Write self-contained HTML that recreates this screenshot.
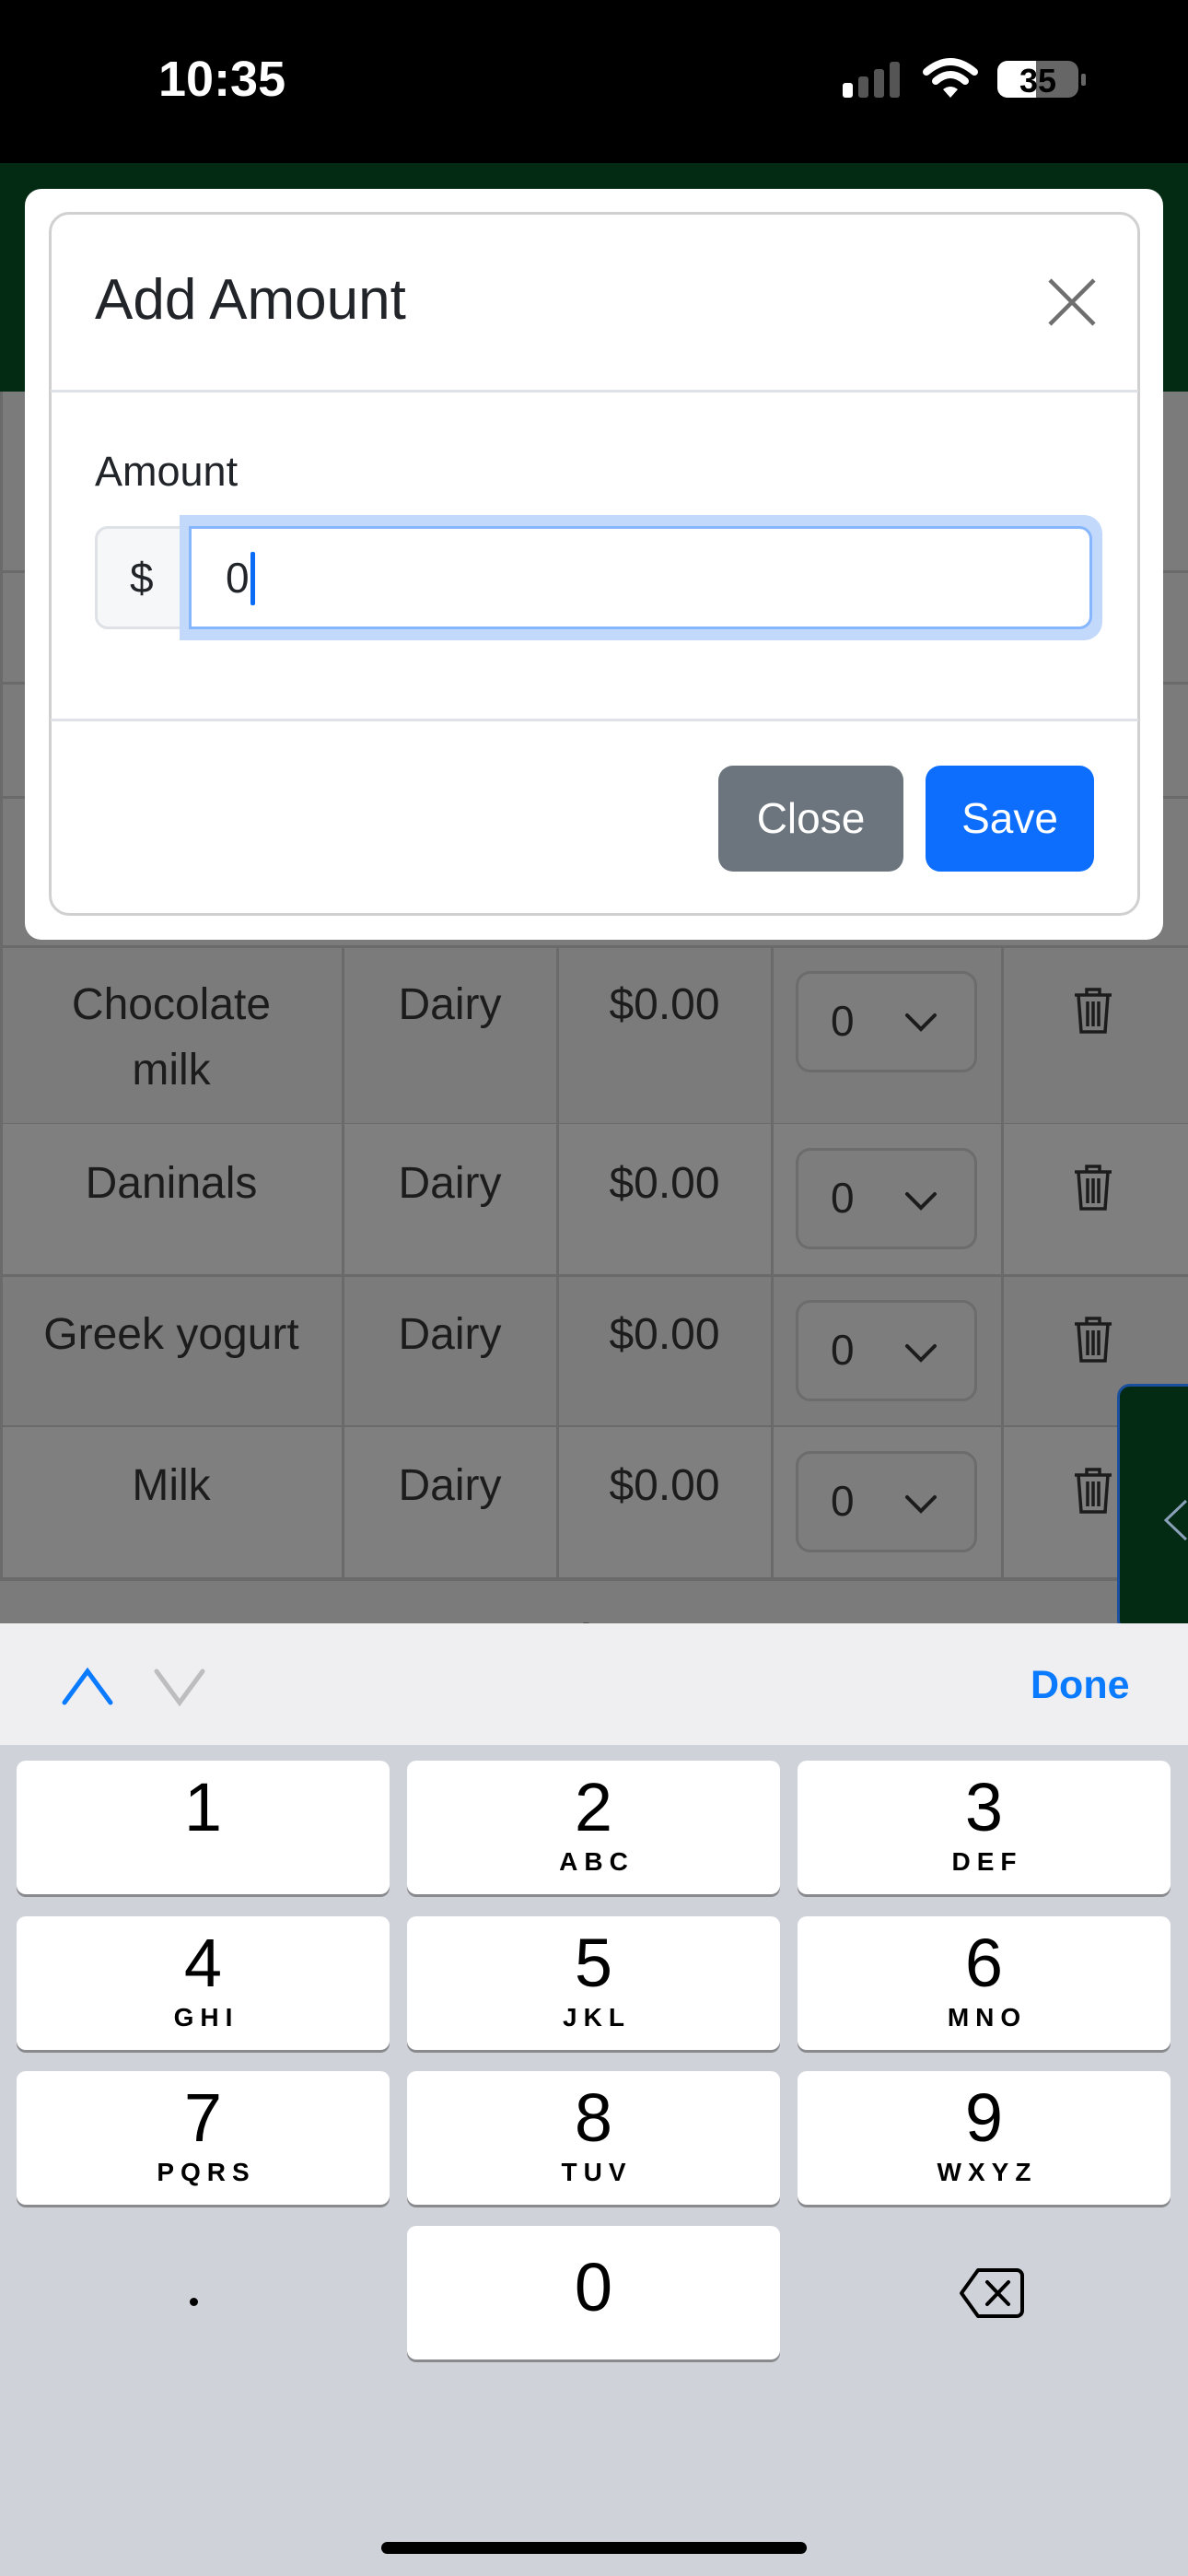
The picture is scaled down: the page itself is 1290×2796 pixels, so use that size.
<!DOCTYPE html>
<html><head><meta charset="utf-8"><style>
*{margin:0;padding:0;box-sizing:border-box}
body{width:1290px;height:2796px;position:relative;overflow:hidden;background:#7b7b7b;font-family:"Liberation Sans",Arial,sans-serif}
.abs{position:absolute}
.cell{position:absolute;color:#1c1c1c;font-size:48px;text-align:center;line-height:71px}
.sel{position:absolute;left:864px;width:197px;height:110px;border:3px solid #6c6c6c;border-radius:16px;background:#7d7d7d}
.sel span{position:absolute;left:35px;top:24px;font-size:46px;color:#1c1c1c}
.key{position:absolute;width:405px;height:145px;background:#fff;border-radius:10px;box-shadow:0 3px 0 #898a8d;text-align:center}
.key .d{position:absolute;left:0;right:0;top:6px;font-size:74px;color:#000;line-height:90px}
.key .l{position:absolute;left:0;right:0;top:94px;font-size:28px;font-weight:bold;letter-spacing:7px;color:#000;padding-left:7px}
</style></head><body>
<div class="abs" style="left:0;top:0;width:1290px;height:177px;background:#000"></div>
<div class="abs" style="left:172px;top:55px;color:#fff;font-size:54px;font-weight:bold">10:35</div>
<svg class="abs" style="left:910px;top:60px" width="270" height="60">
<rect x="5" y="30" width="11" height="16" rx="3" fill="#fff"/>
<rect x="22" y="23" width="11" height="23" rx="3" fill="#555"/>
<rect x="39" y="15" width="11" height="31" rx="3" fill="#555"/>
<rect x="56" y="7" width="11" height="39" rx="3" fill="#555"/>
<path d="M96 18 Q122 -4 148 18" stroke="#fff" stroke-width="8" fill="none" stroke-linecap="round"/>
<path d="M106 28 Q122 14 138 28" stroke="#fff" stroke-width="8" fill="none" stroke-linecap="round"/>
<path d="M114 37 L122 46 L130 37 Q122 31 114 37Z" fill="#fff"/>
<rect x="173" y="6" width="88" height="40" rx="11" fill="#666"/>
<path d="M184 6 H215 V46 H184 A11 11 0 0 1 173 35 V17 A11 11 0 0 1 184 6Z" fill="#fff"/>
<rect x="264" y="20" width="5" height="13" rx="2" fill="#666"/>
<text x="217" y="40" font-size="36" font-weight="bold" fill="#000" text-anchor="middle" font-family="Liberation Sans">35</text>
</svg>
<div class="abs" style="left:0;top:177px;width:1290px;height:248px;background:#032b13"></div>
<div class="abs" style="left:0;top:619px;width:1290px;height:3px;background:#6a6a6a"></div>
<div class="abs" style="left:0;top:740px;width:1290px;height:3px;background:#6a6a6a"></div>
<div class="abs" style="left:0;top:864px;width:1290px;height:3px;background:#6a6a6a"></div>
<div class="abs" style="left:0;top:1026px;width:1290px;height:3px;background:#6a6a6a"></div>
<div class="abs" style="left:0;top:1219px;width:1290px;height:3px;background:#6a6a6a"></div>
<div class="abs" style="left:0;top:1383px;width:1290px;height:3px;background:#6a6a6a"></div>
<div class="abs" style="left:0;top:1547px;width:1290px;height:3px;background:#6a6a6a"></div>
<div class="abs" style="left:0;top:1712px;width:1290px;height:4px;background:#6a6a6a"></div>
<div class="abs" style="left:0;top:1220px;width:1290px;height:163px;background:#7f7f7f"></div>
<div class="abs" style="left:0;top:1549px;width:1290px;height:163px;background:#7f7f7f"></div>
<div class="abs" style="left:0;top:425px;width:3px;height:1290px;background:#6a6a6a"></div>
<div class="abs" style="left:371px;top:1026px;width:3px;height:688px;background:#6a6a6a"></div>
<div class="abs" style="left:604px;top:1026px;width:3px;height:688px;background:#6a6a6a"></div>
<div class="abs" style="left:837px;top:1026px;width:3px;height:688px;background:#6a6a6a"></div>
<div class="abs" style="left:1087px;top:1026px;width:3px;height:688px;background:#6a6a6a"></div>
<div class="cell" style="left:0;width:372px;top:1055px">Chocolate<br>milk</div>
<div class="cell" style="left:372px;width:233px;top:1055px">Dairy</div>
<div class="cell" style="left:605px;width:233px;top:1055px">$0.00</div>
<div class="sel" style="top:1054px"><span>0</span></div>
<div class="cell" style="left:0;width:372px;top:1249px">Daninals</div>
<div class="cell" style="left:372px;width:233px;top:1249px">Dairy</div>
<div class="cell" style="left:605px;width:233px;top:1249px">$0.00</div>
<div class="sel" style="top:1246px"><span>0</span></div>
<div class="cell" style="left:0;width:372px;top:1413px">Greek yogurt</div>
<div class="cell" style="left:372px;width:233px;top:1413px">Dairy</div>
<div class="cell" style="left:605px;width:233px;top:1413px">$0.00</div>
<div class="sel" style="top:1411px"><span>0</span></div>
<div class="cell" style="left:0;width:372px;top:1577px">Milk</div>
<div class="cell" style="left:372px;width:233px;top:1577px">Dairy</div>
<div class="cell" style="left:605px;width:233px;top:1577px">$0.00</div>
<div class="sel" style="top:1575px"><span>0</span></div>
<svg class="abs" style="left:0;top:0" width="1290" height="1760">
<g stroke="#1c1c1c" stroke-width="4" fill="none" stroke-linecap="round">
<path d="M985 1102 l15 15 l15 -15"/><path d="M985 1296 l15 15 l15 -15"/><path d="M985 1461 l15 15 l15 -15"/><path d="M985 1625 l15 15 l15 -15"/>
</g>
<g stroke="#1c1c1c" stroke-width="3.5" fill="none">
<g id="t"><path d="M1167 1080 h40 M1180 1080 v-6 h14 v6 M1171 1080 l3 40 h26 l3 -40 M1181 1087 v27 M1187 1087 v27 M1193 1087 v27"/></g>
<use href="#t" y="192"/><use href="#t" y="357"/><use href="#t" y="521"/>
</g>
</svg>
<div class="abs" style="left:1213px;top:1502px;width:90px;height:270px;background:#032b13;border:3px solid #1a4f9e;border-radius:14px 0 0 14px"></div>
<svg class="abs" style="left:1260px;top:1625px" width="30" height="50"><path d="M28 4 L6 25 L28 46" stroke="#8aa0b8" stroke-width="3" fill="none"/></svg>
<div class="abs" style="left:520px;top:1752px;font-size:46px;font-weight:bold;color:#1c1c1c">Snacks</div>
<div class="abs" style="left:27px;top:205px;width:1236px;height:815px;background:#fff;border-radius:18px"></div>
<div class="abs" style="left:53px;top:230px;width:1185px;height:764px;border:3px solid #d0d0d0;border-radius:22px"></div>
<div class="abs" style="left:103px;top:290px;font-size:62px;color:#212529">Add Amount</div>
<svg class="abs" style="left:1136px;top:300px" width="56" height="56"><path d="M4 4 L52 52 M52 4 L4 52" stroke="#6f6f6f" stroke-width="4.5"/></svg>
<div class="abs" style="left:55px;top:423px;width:1181px;height:3px;background:#dee2e6"></div>
<div class="abs" style="left:103px;top:486px;font-size:45px;color:#212529">Amount</div>
<div class="abs" style="left:103px;top:571px;width:110px;height:112px;background:#f6f7f9;border:3px solid #dee2e6;border-radius:14px 0 0 14px"></div>
<div class="abs" style="left:141px;top:600px;font-size:46px;color:#212529">$</div>
<div class="abs" style="left:195px;top:559px;width:1002px;height:136px;background:#c3d9fc;border-radius:0 20px 20px 0"></div>
<div class="abs" style="left:205px;top:571px;width:981px;height:112px;background:#fff;border:3px solid #86b6fe;border-radius:0 14px 14px 0"></div>
<div class="abs" style="left:245px;top:600px;font-size:46px;color:#212529">0</div>
<div class="abs" style="left:272px;top:599px;width:5px;height:58px;background:#0a6cf5;border-radius:2px"></div>
<div class="abs" style="left:55px;top:780px;width:1181px;height:3px;background:#dee2e6"></div>
<div class="abs" style="left:780px;top:831px;width:201px;height:115px;background:#6c757d;border-radius:16px;color:#fff;font-size:46px;text-align:center;line-height:115px">Close</div>
<div class="abs" style="left:1005px;top:831px;width:183px;height:115px;background:#0d6efd;border-radius:16px;color:#fff;font-size:46px;text-align:center;line-height:115px">Save</div>
<div class="abs" style="left:0;top:1762px;width:1290px;height:132px;background:#efeff2"></div>
<svg class="abs" style="left:60px;top:1800px" width="180" height="60"><path d="M10 48 L35 14 L60 48" stroke="#0a7aff" stroke-width="5" fill="none" stroke-linecap="round"/><path d="M110 14 L135 48 L160 14" stroke="#bdbdc0" stroke-width="5" fill="none" stroke-linecap="round"/></svg>
<div class="abs" style="left:1119px;top:1805px;font-size:43px;font-weight:bold;color:#0a7aff">Done</div>
<div class="abs" style="left:0;top:1894px;width:1290px;height:902px;background:#cfd2d9"></div>
<div class="key" style="left:18px;top:1911px"><div class="d">1</div></div>
<div class="key" style="left:442px;top:1911px"><div class="d">2</div><div class="l">ABC</div></div>
<div class="key" style="left:866px;top:1911px"><div class="d">3</div><div class="l">DEF</div></div>
<div class="key" style="left:18px;top:2080px"><div class="d">4</div><div class="l">GHI</div></div>
<div class="key" style="left:442px;top:2080px"><div class="d">5</div><div class="l">JKL</div></div>
<div class="key" style="left:866px;top:2080px"><div class="d">6</div><div class="l">MNO</div></div>
<div class="key" style="left:18px;top:2248px"><div class="d">7</div><div class="l">PQRS</div></div>
<div class="key" style="left:442px;top:2248px"><div class="d">8</div><div class="l">TUV</div></div>
<div class="key" style="left:866px;top:2248px"><div class="d">9</div><div class="l">WXYZ</div></div>
<div class="key" style="left:442px;top:2416px"><div class="d" style="top:22px">0</div></div>
<div class="abs" style="left:206px;top:2494px;width:9px;height:9px;border-radius:50%;background:#000"></div>
<svg class="abs" style="left:1040px;top:2458px" width="74" height="62"><path d="M22 6 H64 A6 6 0 0 1 70 12 V50 A6 6 0 0 1 64 56 H22 L4 31 Z" stroke="#000" stroke-width="4" fill="none" stroke-linejoin="round"/><path d="M32 19 L55 43 M55 19 L32 43" stroke="#000" stroke-width="4" stroke-linecap="round"/></svg>
<div class="abs" style="left:414px;top:2759px;width:462px;height:13px;border-radius:7px;background:#000"></div>
</body></html>
